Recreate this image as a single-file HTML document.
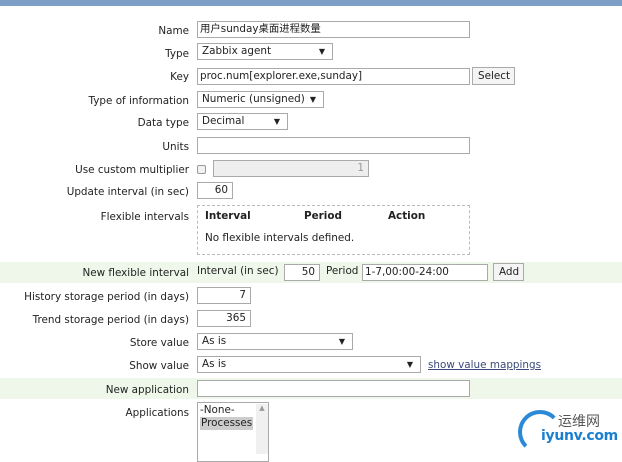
<!DOCTYPE html><html><head><meta charset="utf-8"><style>
body{margin:0;width:622px;height:454px;overflow:hidden;background:#fff;font-family:"DejaVu Sans","Liberation Sans","Noto Sans CJK SC",sans-serif;font-size:10.4px;color:#222;position:relative}
div{position:absolute;box-sizing:border-box}
.l{right:433px;text-align:right;white-space:nowrap;line-height:14px}
.i{border:1px solid #aaa;background:#fff;height:17px;line-height:15px;padding:0 4px;white-space:nowrap;font-size:10.4px}
.r{text-align:right}
.s::after{content:"▼";position:absolute;right:7px;top:0;font-size:8px}
.b{border:1px solid #aaa;background:#f4f4f4;height:18px;line-height:16px;padding:0 5px}
.g{left:0;width:622px;background:#eef7e9}
</style></head><body>
<div style="left:0;top:0;width:622px;height:6px;background:#7d9ec6"></div>
<div class="g" style="top:262px;height:21px"></div>
<div class="g" style="top:378px;height:21px"></div>

<div class="l" style="top:24px">Name</div>
<div class="i" style="left:197px;top:21px;width:273px;padding-left:2px">用户sunday桌面进程数量</div>
<div class="l" style="top:47px">Type</div>
<div class="i s" style="left:197px;top:43px;width:136px">Zabbix agent</div>
<div class="l" style="top:70px">Key</div>
<div class="i" style="left:197px;top:68px;width:273px;padding-left:2px">proc.num[explorer.exe,sunday]</div>
<div class="b" style="left:472px;top:67px;width:43px">Select</div>
<div class="l" style="top:94px">Type of information</div>
<div class="i s" style="left:197px;top:91px;width:127px">Numeric (unsigned)</div>
<div class="l" style="top:116px">Data type</div>
<div class="i s" style="left:197px;top:113px;width:91px">Decimal</div>
<div class="l" style="top:140px">Units</div>
<div class="i" style="left:197px;top:137px;width:273px"></div>
<div class="l" style="top:163px">Use custom multiplier</div>
<div style="left:197px;top:165px;width:9px;height:9px;border:1px solid #999;border-radius:2px;background:#f2f2f2"></div>
<div class="i r" style="left:213px;top:160px;width:156px;background:#eee;color:#999">1</div>
<div class="l" style="top:185px">Update interval (in sec)</div>
<div class="i r" style="left:197px;top:182px;width:36px">60</div>
<div class="l" style="top:210px">Flexible intervals</div>
<div style="left:197px;top:205px;width:273px;height:50px;border:1px dashed #bbb"></div>
<div style="left:205px;top:210px;font-weight:bold">Interval</div>
<div style="left:304px;top:210px;font-weight:bold">Period</div>
<div style="left:388px;top:210px;font-weight:bold">Action</div>
<div style="left:205px;top:232px">No flexible intervals defined.</div>

<div class="l" style="top:266px">New flexible interval</div>
<div style="left:197px;top:265px">Interval (in sec)</div>
<div class="i r" style="left:284px;top:264px;width:36px">50</div>
<div style="left:326px;top:265px">Period</div>
<div class="i" style="left:362px;top:264px;width:126px;padding-left:2px">1-7,00:00-24:00</div>
<div class="b" style="left:493px;top:263px;width:31px">Add</div>

<div class="l" style="top:290px">History storage period (in days)</div>
<div class="i r" style="left:197px;top:287px;width:54px">7</div>
<div class="l" style="top:313px">Trend storage period (in days)</div>
<div class="i r" style="left:197px;top:310px;width:54px">365</div>
<div class="l" style="top:336px">Store value</div>
<div class="i s" style="left:197px;top:333px;width:156px">As is</div>
<div class="l" style="top:359px">Show value</div>
<div class="i s" style="left:197px;top:356px;width:224px">As is</div>
<div style="left:428px;top:359px;color:#3a4a7a;text-decoration:underline">show value mappings</div>
<div class="l" style="top:383px">New application</div>
<div class="i" style="left:197px;top:380px;width:273px"></div>
<div class="l" style="top:406px">Applications</div>
<div style="left:197px;top:402px;width:72px;height:60px;border:1px solid #aaa"></div>
<div style="left:200px;top:404px;line-height:13px">-None-</div>
<div style="left:200px;top:417px;line-height:13px;background:#ccc;padding:0 1px">Processes</div>
<div style="left:256px;top:404px;width:12px;height:50px;background:#f0f0f0;font-size:7px;color:#999;text-align:center">▲</div>

<div style="left:518px;top:410px;width:44px;height:44px;border:4px solid #2a8ad8;border-radius:50%;border-right-color:transparent;border-bottom-color:transparent"></div>
<div style="left:558px;top:411px;font-size:14px;color:#555">运维网</div>
<div style="left:541px;top:428px;font-size:14px;font-weight:bold;color:#1a7fd0;letter-spacing:-0.3px">iyunv.com</div>
</body></html>
